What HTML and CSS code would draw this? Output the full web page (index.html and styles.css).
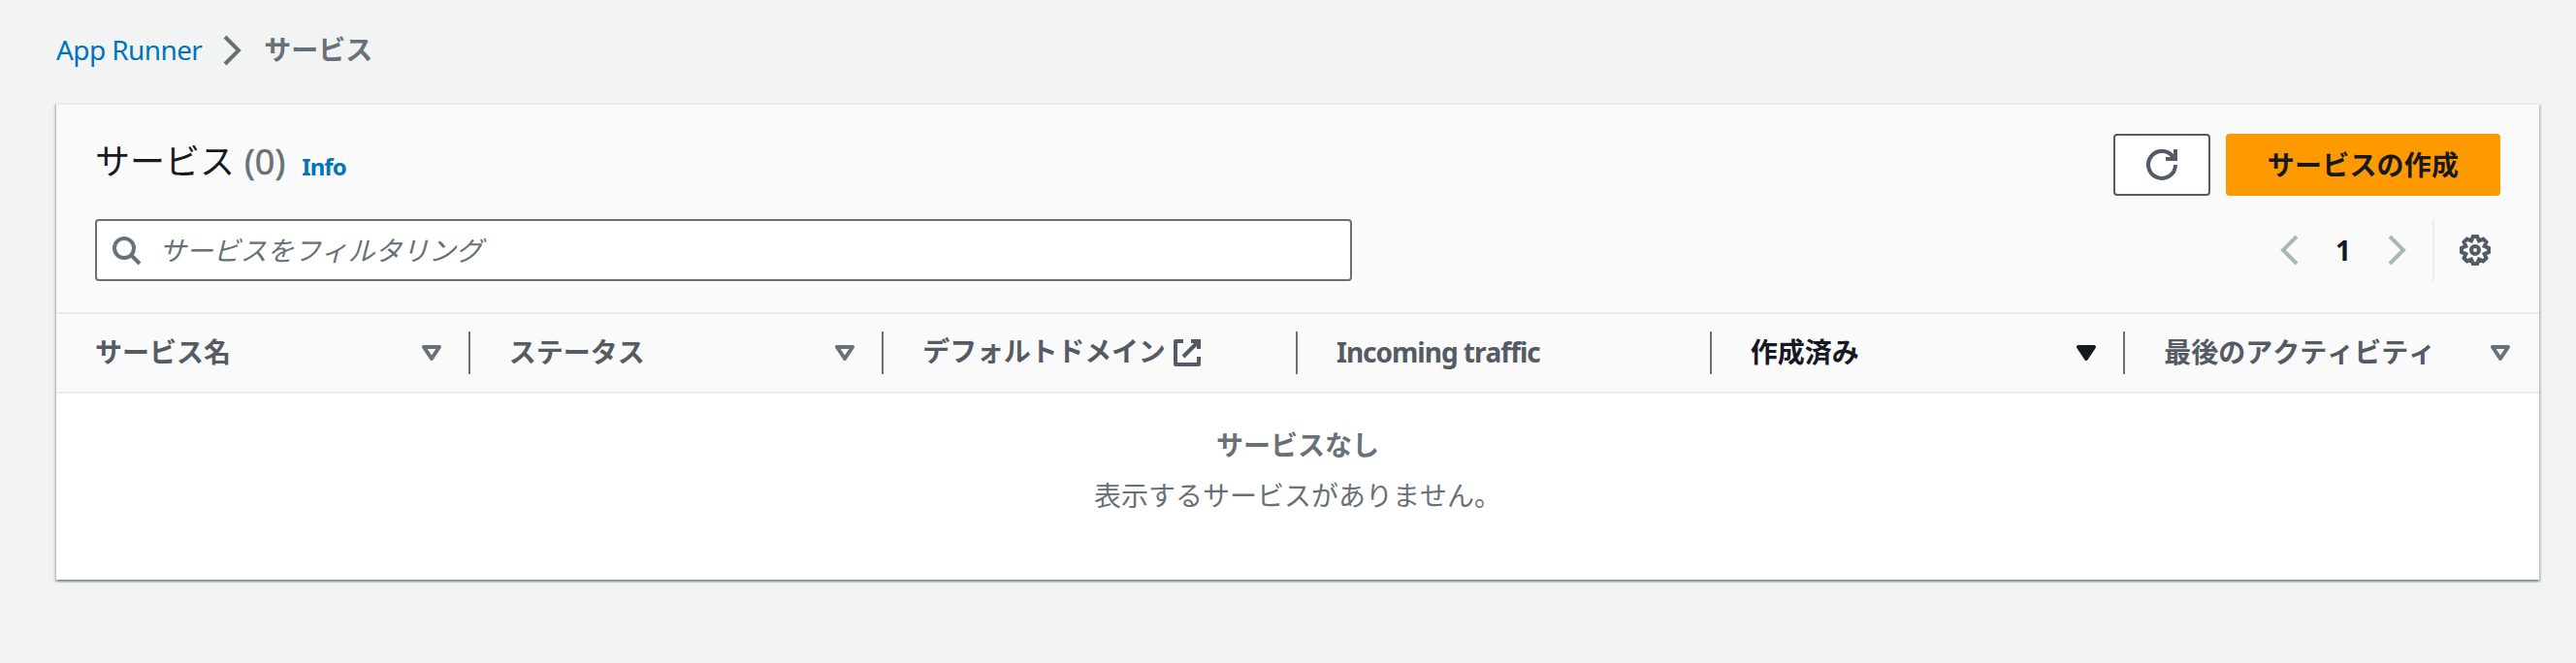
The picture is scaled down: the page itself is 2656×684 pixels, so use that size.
FILE: index.html
```
<!DOCTYPE html>
<html lang="ja">
<head>
<meta charset="utf-8">
<title>App Runner</title>
<link rel="stylesheet" href="styles.css">
</head>
<body>
<nav class="breadcrumb">
  <a class="crumb-link">App Runner</a>
  <svg class="crumb-sep" width="32" height="32" viewBox="0 0 16 16"><path d="M4 1l7 7-7 7"/></svg>
  <span class="crumb-current">サービス</span>
</nav>
<main class="card">
  <header class="card-header">
    <div class="title-row">
      <h1 class="title">サービス<span class="count">(0)</span></h1>
      <a class="info">Info</a>
      <div class="actions">
        <button class="btn btn-refresh"><svg class="line-icon" width="32" height="32" viewBox="0 0 16 16"><path d="M10 5h5V0"/><path d="M15 8a7 7 0 1 1-.700-3.100"/></svg></button>
        <button class="btn btn-primary">サービスの作成</button>
      </div>
    </div>
    <div class="tools-row">
      <div class="search">
        <svg class="search-icon" width="32" height="32" viewBox="0 0 16 16"><circle cx="7" cy="7" r="5"/><path d="M15 15l-4.500-4.500"/></svg>
        <span class="placeholder">サービスをフィルタリング</span>
      </div>
      <div class="pager">
        <svg class="page-arrow" width="32" height="32" viewBox="0 0 16 16"><path d="M12 1L5 8l7 7"/></svg>
        <span class="page-number">1</span>
        <svg class="page-arrow" width="32" height="32" viewBox="0 0 16 16"><path d="M4 1l7 7-7 7"/></svg>
        <span class="tool-divider"></span>
        <svg class="gear" width="32" height="32" viewBox="0 0 16 16"><path d="M6.900 1h2.200l.89 2.200 2.180-.930 1.560 1.560-.930 2.180L15 6.900v2.200l-2.200.890.930 2.180-1.560 1.560-2.180-.930L9.100 15H6.900l-.890-2.200-2.180.930-1.560-1.560.930-2.180L1 9.100V6.900l2.200-.890-.930-2.180 1.560-1.560 2.180.930z"/><circle cx="8" cy="8" r="2"/></svg>
      </div>
    </div>
  </header>
  <div class="table-head">
    <div class="th"><span class="label">サービス名</span><svg class="sort" width="20" height="16" viewBox="0 0 20 16"><path d="M2 2h16l-8 12z"/></svg></div>
    <div class="th"><span class="label">ステータス</span><svg class="sort" width="20" height="16" viewBox="0 0 20 16"><path d="M2 2h16l-8 12z"/></svg></div>
    <div class="th"><span class="label label-link">デフォルトドメイン</span><svg class="external" width="32" height="32" viewBox="0 0 16 16"><path d="M10 2h4v4"/><path d="M6 10l8-8"/><path d="M14 10v4H2V2h4" stroke-linejoin="round"/></svg></div>
    <div class="th"><span class="label latin">Incoming traffic</span></div>
    <div class="th th-sorted"><span class="label">作成済み</span><svg class="sort" width="20" height="16" viewBox="0 0 20 16"><path d="M2 2h16l-8 12z"/></svg></div>
    <div class="th"><span class="label">最後のアクティビティ</span><svg class="sort" width="20" height="16" viewBox="0 0 20 16"><path d="M2 2h16l-8 12z"/></svg></div>
  </div>
  <section class="empty">
    <strong class="empty-title">サービスなし</strong>
    <p class="empty-text">表示するサービスがありません。</p>
  </section>
</main>
</body>
</html>
```
FILE: styles.css
```
* { box-sizing: border-box; }
body {
  margin: 0;
  padding: 28px 38px 0 58px;
  min-height: 684px;
  background: #f2f3f3;
  color: #16191f;
  font-family: "Noto Sans", "Noto Sans CJK JP", sans-serif;
  font-size: 28px;
  line-height: 44px;
  font-kerning: none;
}
svg { display: block; flex: none; fill: none; stroke: currentColor; stroke-width: 2; }
.breadcrumb { display: flex; align-items: center; height: 48px; color: #687078; }
.crumb-link { margin-top: -2px; color: #0073bb; letter-spacing: -.6px; }
.crumb-sep { margin: 0 16px; }
.crumb-current { margin-top: -2px; font-weight: 700; }
.card {
  margin-top: 30px;
  height: 492px;
  border-top: 2px solid #eaeded;
  background: #fff;
  box-shadow: 0 2px 2px 0 rgba(0,28,36,.3), 2px 2px 2px 0 rgba(0,28,36,.15), -2px 2px 2px 0 rgba(0,28,36,.15);
}
.card-header { height: 214px; padding: 30px 40px 0; background: #fafafa; }
.title-row { display: flex; height: 64px; }
.title { margin: 1px 0 0; font-size: 36px; font-weight: 400; line-height: 56px; }
.count { margin-left: 10px; color: #687078; -webkit-text-stroke: .5px #687078; }
.info { margin: 12px 0 0 17px; font-size: 24px; font-weight: 700; letter-spacing: -.9px; color: #0073bb; }
.actions { display: flex; gap: 16px; margin-left: auto; }
.btn { display: flex; align-items: center; justify-content: center; height: 64px; padding: 0; border-radius: 4px; font: inherit; }
.btn-refresh { width: 100px; border: 2px solid #545b64; background: #fff; color: #545b64; }
.btn-primary { width: 283px; padding-bottom: 1px; border: 0; background: #ff9900; color: #16191f; font-weight: 700; letter-spacing: .2px; }
.tools-row { display: flex; justify-content: space-between; margin-top: 24px; height: 64px; }
.search { display: flex; align-items: center; width: 1296px; padding-left: 14px; border: 2px solid #687078; border-radius: 4px; background: #fff; color: #687078; }
.placeholder { margin-left: 18px; font-style: italic; letter-spacing: -.2px; }
.pager { display: flex; align-items: center; padding-right: 10px; }
.page-arrow { color: #aab7b8; }
.page-number { width: 80px; text-align: center; font-weight: 700; }
.tool-divider { width: 2px; height: 64px; margin: 0 26px 0 20px; background: #eaeded; }
.gear { color: #545b64; }
.table-head {
  display: grid;
  grid-template-columns: repeat(6, 1fr);
  height: 84px;
  border-top: 2px solid #eaeded;
  border-bottom: 2px solid #eaeded;
  background: #fafafa;
}
.th {
  display: flex;
  align-items: center;
  height: 44px;
  margin: 18px 0;
  padding: 0 28px 0 40px;
  border-right: 2px solid #687078;
  color: #545b64;
  font-weight: 700;
  white-space: nowrap;
}
.th:last-child { border-right: 0; padding-right: 30px; }
.th-sorted { color: #16191f; }
.label { margin-top: -2px; }
.label-link { margin-top: -5px; letter-spacing: -.2px; }
.latin { letter-spacing: -1px; }
.sort { margin-left: auto; color: #687078; stroke-width: 4; stroke-linejoin: round; }
.th-sorted .sort { color: #16191f; fill: currentColor; }
.external { margin-left: 6px; }
.empty { padding-top: 31px; text-align: center; color: #687078; }
.empty-title { display: block; }
.empty-text { margin: 8px 0 0; }
```
